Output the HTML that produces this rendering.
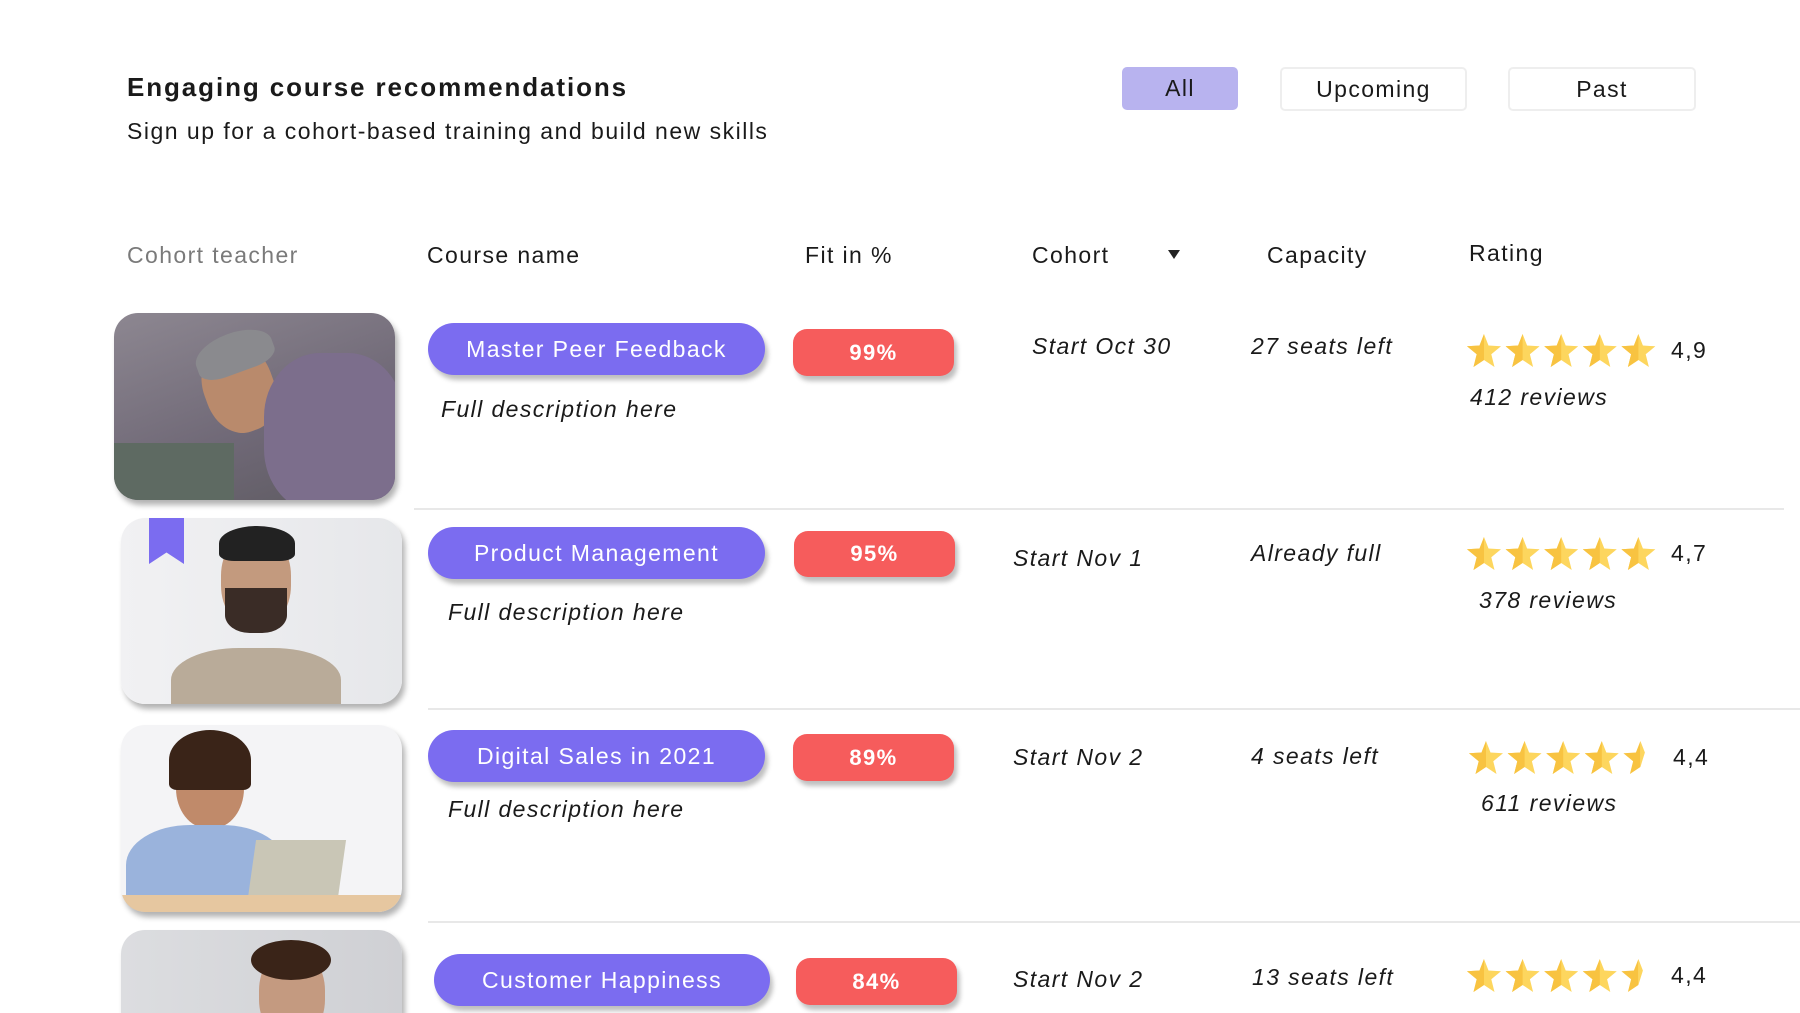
<!DOCTYPE html>
<html><head><meta charset="utf-8"><style>
*{margin:0;padding:0;box-sizing:border-box}
html,body{width:1800px;height:1013px;overflow:hidden}
body{background:#fff;font-family:"Liberation Sans",sans-serif;color:#1a1a1a;position:relative;letter-spacing:1.4px}
.a{position:absolute;white-space:nowrap}
.t{font-size:26px;font-weight:bold;left:127px;top:72px;letter-spacing:1.9px}
.s{font-size:23px;left:127px;top:118px;letter-spacing:1.5px}
.btn{position:absolute;border:2px solid #eee;border-radius:5px;font-size:23px;display:flex;align-items:center;justify-content:center;background:#fff}
.h{font-size:23px;top:242px}
.ph{position:absolute;border-radius:24px;overflow:hidden;box-shadow:3px 5px 6px rgba(0,0,0,.3)}
.pill{position:absolute;background:#7b6cf0;color:#fff;border-radius:26px;font-size:23px;display:flex;align-items:center;justify-content:center;box-shadow:3px 5px 5px rgba(0,0,0,.25)}
.red{position:absolute;background:#f65c5c;color:#fff;border-radius:14px;font-size:22px;font-weight:bold;display:flex;align-items:center;justify-content:center;box-shadow:3px 5px 5px rgba(0,0,0,.25)}
.i{font-style:italic;font-size:23px}
.hr{position:absolute;height:2px;background:#e8e8e8}
.st{position:absolute}
</style></head><body>
<div class="a t">Engaging course recommendations</div>
<div class="a s">Sign up for a cohort-based training and build new skills</div>
<div class="btn" style="left:1122px;top:67px;width:116px;height:43px;background:#b8b3ef;border-color:#b8b3ef">All</div>
<div class="btn" style="left:1280px;top:67px;width:187px;height:44px">Upcoming</div>
<div class="btn" style="left:1508px;top:67px;width:188px;height:44px">Past</div>

<div class="a h" style="left:127px;color:#7a7a7a">Cohort teacher</div>
<div class="a h" style="left:427px">Course name</div>
<div class="a h" style="left:805px">Fit in %</div>
<div class="a h" style="left:1032px">Cohort</div>
<div class="a" style="left:1168px;top:250px;width:0;height:0;border-left:6px solid transparent;border-right:6px solid transparent;border-top:9px solid #222"></div>
<div class="a h" style="left:1267px">Capacity</div>
<div class="a h" style="left:1469px;top:240px">Rating</div>

<svg width="0" height="0" style="position:absolute"><defs>
<symbol id="sf" viewBox="0 0 34 33"><polygon points="17,0 21.5,11.5 34,12.3 24.3,20.3 27.5,33 17,26 6.5,33 9.7,20.3 0,12.3 12.5,11.5" fill="#fdd65e"/><polygon points="17,0 12.5,11.5 0,12.3 9.7,20.3 6.5,33 17,26" fill="#f8c341"/></symbol>
<symbol id="sh" viewBox="0 0 34 33"><polygon points="17,0 12.5,11.5 0,12.3 9.7,20.3 6.5,33 17,26" fill="#f8c341"/><polygon points="17,0 21.5,11.5 17,26" fill="#fdd65e"/></symbol>
</defs></svg>

<!-- Row 1 -->
<div class="ph" style="left:114px;top:313px;width:281px;height:187px;background:linear-gradient(160deg,#8d8791,#6f6876 60%,#5d5a60)">
<div style="position:absolute;left:90px;top:30px;width:70px;height:90px;border-radius:45%;background:#b98a6c;transform:rotate(-20deg)"></div>
<div style="position:absolute;left:80px;top:20px;width:80px;height:40px;border-radius:50% 50% 30% 30%;background:#8a8a8e;transform:rotate(-20deg)"></div>
<div style="position:absolute;left:150px;top:40px;width:140px;height:160px;border-radius:40%;background:#7c6e8c"></div>
<div style="position:absolute;left:0;top:130px;width:120px;height:60px;background:#5e6a62"></div></div>
<div class="pill" style="left:428px;top:323px;width:337px;height:52px">Master Peer Feedback</div>
<div class="red" style="left:793px;top:329px;width:161px;height:47px">99%</div>
<div class="a i" style="left:441px;top:396px">Full description here</div>
<div class="a i" style="left:1032px;top:333px">Start Oct 30</div>
<div class="a i" style="left:1251px;top:333px">27 seats left</div>
<svg class="st" style="left:1467px;top:334px" width="200" height="36"><use href="#sf" x="0" width="34" height="33"/><use href="#sf" x="38.6" width="34" height="33"/><use href="#sf" x="77.2" width="34" height="33"/><use href="#sf" x="115.8" width="34" height="33"/><use href="#sf" x="154.4" width="34" height="33"/></svg>
<div class="a" style="left:1671px;top:337px;font-size:23px">4,9</div>
<div class="a i" style="left:1470px;top:384px">412 reviews</div>
<div class="hr" style="left:414px;top:508px;width:1370px"></div>

<!-- Row 2 -->
<div class="ph" style="left:121px;top:518px;width:281px;height:186px;background:linear-gradient(90deg,#f1f1f3,#e6e7ea)">
<div style="position:absolute;left:100px;top:15px;width:70px;height:95px;border-radius:45%;background:#c39a7e"></div>
<div style="position:absolute;left:98px;top:8px;width:76px;height:35px;border-radius:50% 50% 20% 20%;background:#222"></div>
<div style="position:absolute;left:104px;top:70px;width:62px;height:45px;border-radius:0 0 40% 40%;background:#3a2c26"></div>
<div style="position:absolute;left:50px;top:130px;width:170px;height:80px;border-radius:40% 40% 0 0;background:#b9ab99"></div></div>
<div class="a" style="left:149px;top:518px;width:35px;height:46px;background:#7b6cf0;clip-path:polygon(0 0,100% 0,100% 100%,50% 75%,0 100%)"></div>
<div class="pill" style="left:428px;top:527px;width:337px;height:52px">Product Management</div>
<div class="red" style="left:794px;top:531px;width:161px;height:46px">95%</div>
<div class="a i" style="left:448px;top:599px">Full description here</div>
<div class="a i" style="left:1013px;top:545px">Start Nov 1</div>
<div class="a i" style="left:1251px;top:540px">Already full</div>
<svg class="st" style="left:1467px;top:537px" width="200" height="36"><use href="#sf" x="0" width="34" height="33"/><use href="#sf" x="38.6" width="34" height="33"/><use href="#sf" x="77.2" width="34" height="33"/><use href="#sf" x="115.8" width="34" height="33"/><use href="#sf" x="154.4" width="34" height="33"/></svg>
<div class="a" style="left:1671px;top:540px;font-size:23px">4,7</div>
<div class="a i" style="left:1479px;top:587px">378 reviews</div>
<div class="hr" style="left:428px;top:708px;width:1372px"></div>

<!-- Row 3 -->
<div class="ph" style="left:121px;top:725px;width:281px;height:187px;background:#f4f4f6">
<div style="position:absolute;left:55px;top:15px;width:68px;height:88px;border-radius:45%;background:#c08a6a"></div>
<div style="position:absolute;left:48px;top:5px;width:82px;height:60px;border-radius:50% 50% 10% 10%;background:#3a2418"></div>
<div style="position:absolute;left:5px;top:100px;width:160px;height:100px;border-radius:40% 40% 0 0;background:#9ab3dc"></div>
<div style="position:absolute;left:130px;top:115px;width:90px;height:72px;background:#c9c6b6;transform:skew(-8deg)"></div>
<div style="position:absolute;left:0;top:170px;width:281px;height:20px;background:#e6c7a0"></div></div>
<div class="pill" style="left:428px;top:730px;width:337px;height:52px">Digital Sales in 2021</div>
<div class="red" style="left:793px;top:734px;width:161px;height:47px">89%</div>
<div class="a i" style="left:448px;top:796px">Full description here</div>
<div class="a i" style="left:1013px;top:744px">Start Nov 2</div>
<div class="a i" style="left:1251px;top:743px">4 seats left</div>
<svg class="st" style="left:1469px;top:741px" width="200" height="36"><use href="#sf" x="0" width="34" height="33"/><use href="#sf" x="38.6" width="34" height="33"/><use href="#sf" x="77.2" width="34" height="33"/><use href="#sf" x="115.8" width="34" height="33"/><use href="#sh" x="154.4" width="34" height="33"/></svg>
<div class="a" style="left:1673px;top:744px;font-size:23px">4,4</div>
<div class="a i" style="left:1481px;top:790px">611 reviews</div>
<div class="hr" style="left:428px;top:921px;width:1372px"></div>

<!-- Row 4 -->
<div class="ph" style="left:121px;top:930px;width:281px;height:83px;border-radius:24px 24px 0 0;background:linear-gradient(90deg,#dcdde0,#cfd0d4)">
<div style="position:absolute;left:138px;top:20px;width:66px;height:90px;border-radius:45%;background:#c49a80"></div>
<div style="position:absolute;left:130px;top:10px;width:80px;height:40px;border-radius:50%;background:#3a2418"></div></div>
<div class="pill" style="left:434px;top:954px;width:336px;height:52px">Customer Happiness</div>
<div class="red" style="left:796px;top:958px;width:161px;height:47px">84%</div>
<div class="a i" style="left:1013px;top:966px">Start Nov 2</div>
<div class="a i" style="left:1252px;top:964px">13 seats left</div>
<svg class="st" style="left:1467px;top:959px" width="200" height="36"><use href="#sf" x="0" width="34" height="33"/><use href="#sf" x="38.6" width="34" height="33"/><use href="#sf" x="77.2" width="34" height="33"/><use href="#sf" x="115.8" width="34" height="33"/><use href="#sh" x="154.4" width="34" height="33"/></svg>
<div class="a" style="left:1671px;top:962px;font-size:23px">4,4</div>
</body></html>
